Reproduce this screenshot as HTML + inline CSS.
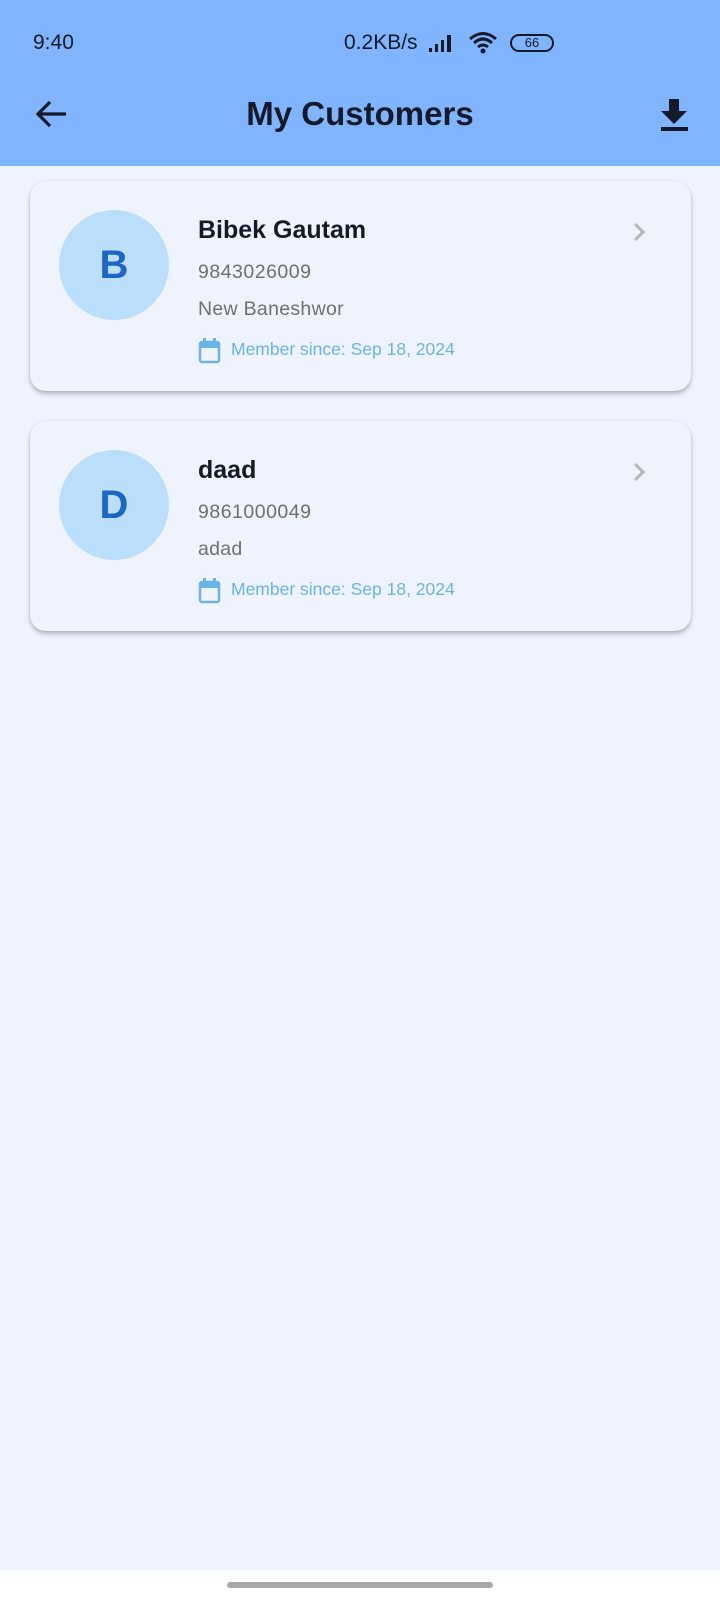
<!DOCTYPE html>
<html><head><meta charset="utf-8"><style>
*{margin:0;padding:0;box-sizing:border-box}
body{width:720px;height:1600px;background:#eef3fe;font-family:"Liberation Sans",sans-serif;position:relative;overflow:hidden}
.hdr{position:absolute;left:0;top:0;width:720px;height:166px;background:#80b4fc}
.t{position:absolute;color:#141a2a}
.card{position:absolute;left:30px;width:661px;height:210px;background:#eff3fd;border-radius:16px;box-shadow:0 3px 4px rgba(0,0,0,.25),0 0 1px rgba(0,0,0,.15)}
.av{position:absolute;left:29px;top:29px;width:110px;height:110px;border-radius:50%;background:#bbdefa;color:#1e66c4;font-weight:bold;font-size:40px;text-align:center;line-height:110px}
.nm{position:absolute;left:168px;top:35px;font-size:25px;font-weight:bold;color:#141a2a}
.ph{position:absolute;left:168px;top:80px;font-size:19.5px;color:#707070;letter-spacing:.5px}
.ad{position:absolute;left:168px;top:117px;font-size:19.5px;color:#707070;letter-spacing:.3px}
.ms{position:absolute;left:201px;top:158px;font-size:17.5px;color:#6ab4e8}
.cal{position:absolute;left:168px;top:157px}
.chev{position:absolute;left:602px;top:40px}
</style></head><body>
<div class="hdr"></div>
<div class="t" style="left:33px;top:31px;font-size:21px">9:40</div>
<div class="t" style="left:344px;top:31px;font-size:21px">0.2KB/s</div>
<svg style="position:absolute;left:428px;top:32px" width="36" height="22"><rect x="1" y="16" width="3" height="4" fill="#141a2a"/><rect x="7" y="12" width="3" height="8" fill="#141a2a"/><rect x="13" y="8" width="3" height="12" fill="#141a2a"/><rect x="19" y="3" width="4" height="17" fill="#141a2a"/></svg>
<svg style="position:absolute;left:468px;top:30px" width="34" height="26" viewBox="0 0 34 26"><path d="M2 9 Q15 -2 28 9" stroke="#141a2a" stroke-width="3" fill="none"/><path d="M6 13 Q15 5 24 13" stroke="#141a2a" stroke-width="3" fill="none"/><path d="M10 17 Q15 13 20 17" stroke="#141a2a" stroke-width="3" fill="none"/><circle cx="15" cy="21" r="2.5" fill="#141a2a"/></svg>
<div style="position:absolute;left:510px;top:34px;width:44px;height:18px;border:2px solid #141a2a;border-radius:9px;font-size:13px;text-align:center;line-height:14px;color:#141a2a">66</div>
<svg style="position:absolute;left:34px;top:98px" width="36" height="32" viewBox="0 0 36 32"><path d="M32 16 H5 M16 4 L4 16 L16 28" stroke="#141a2a" stroke-width="3.2" fill="none"/></svg>
<div class="t" style="left:0;width:720px;text-align:center;top:95px;font-size:33px;font-weight:bold">My Customers</div>
<svg style="position:absolute;left:660px;top:98px" width="30" height="34" viewBox="0 0 30 34"><path d="M9 1 H19 V13 H27 L14 26 L1 13 H9 Z" fill="#141a2a"/><rect x="1" y="29" width="27" height="4" fill="#141a2a"/></svg>

<div class="card" style="top:181px">
<div class="av">B</div>
<div class="nm">Bibek Gautam</div>
<div class="ph">9843026009</div>
<div class="ad">New Baneshwor</div>
<svg class="cal" width="24" height="26" viewBox="0 0 24 26"><rect x="2" y="4" width="19" height="20" rx="2" fill="none" stroke="#6ab4e8" stroke-width="2.5"/><rect x="2" y="4" width="19" height="6" fill="#6ab4e8"/><rect x="5" y="0" width="3" height="5" fill="#6ab4e8"/><rect x="15" y="0" width="3" height="5" fill="#6ab4e8"/></svg>
<div class="ms">Member since: Sep 18, 2024</div>
<svg class="chev" width="14" height="22" viewBox="0 0 14 22"><path d="M3 3 L11 11 L3 19" stroke="#b5b5b5" stroke-width="3" fill="none"/></svg>
</div>

<div class="card" style="top:421px">
<div class="av">D</div>
<div class="nm">daad</div>
<div class="ph">9861000049</div>
<div class="ad">adad</div>
<svg class="cal" width="24" height="26" viewBox="0 0 24 26"><rect x="2" y="4" width="19" height="20" rx="2" fill="none" stroke="#6ab4e8" stroke-width="2.5"/><rect x="2" y="4" width="19" height="6" fill="#6ab4e8"/><rect x="5" y="0" width="3" height="5" fill="#6ab4e8"/><rect x="15" y="0" width="3" height="5" fill="#6ab4e8"/></svg>
<div class="ms">Member since: Sep 18, 2024</div>
<svg class="chev" width="14" height="22" viewBox="0 0 14 22"><path d="M3 3 L11 11 L3 19" stroke="#b5b5b5" stroke-width="3" fill="none"/></svg>
</div>

<div style="position:absolute;left:0;top:1570px;width:720px;height:30px;background:#fff"></div>
<div style="position:absolute;left:227px;top:1582px;width:266px;height:6px;border-radius:3px;background:#a8a8a8"></div>
</body></html>
